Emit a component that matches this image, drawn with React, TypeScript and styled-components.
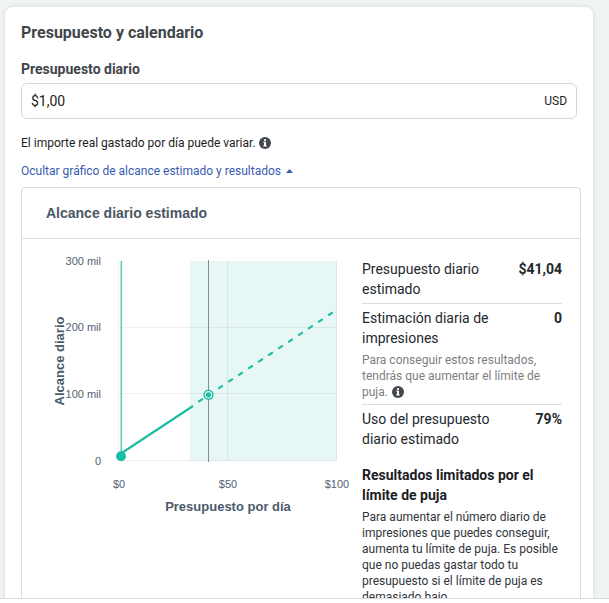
import React from "react";
import styled, { createGlobalStyle } from "styled-components";

const GlobalStyle = createGlobalStyle`
  * { box-sizing: border-box; }
  body { margin: 0; background: #fff; font-family: Roboto, sans-serif; }
`;

const Viewport = styled.div`
  height: 599px;
  overflow: hidden;
  background: #f1f4f4;
  border-bottom: 1px solid #d9dbdd;
  padding: 7px 0 0 5px;
`;

const Card = styled.section`
  width: 588px;
  height: 700px;
  padding: 16px;
  background: #fff;
  border-radius: 8px;
  box-shadow: 0 0 5px rgba(0, 0, 0, 0.12);
`;

const Title = styled.h2`
  margin: 0;
  font-size: 16px;
  line-height: 20px;
  font-weight: 700;
  color: #41464b;
`;

const Label = styled.label`
  display: block;
  margin-top: 16px;
  font-size: 14px;
  line-height: 20px;
  font-weight: 700;
  color: #41464b;
`;

const Field = styled.div`
  display: flex;
  align-items: center;
  justify-content: space-between;
  width: 556px;
  height: 36px;
  margin-top: 4px;
  padding: 0 9px;
  border: 1px solid #d5d7d9;
  border-radius: 6px;
  font-size: 14px;
  color: #1c1e21;
`;

const Currency = styled.span`
  font-size: 12px;
`;

const Note = styled.p`
  display: flex;
  align-items: center;
  gap: 3px;
  margin: 16px 0 0;
  font-size: 12px;
  line-height: 16px;
  color: #1c1e21;
`;

const Toggle = styled.button`
  display: flex;
  align-items: center;
  gap: 5px;
  margin: 12px 0 0;
  padding: 0;
  border: 0;
  background: none;
  font: 12px/16px Roboto, sans-serif;
  color: #385bae;
`;

const Panel = styled.section`
  width: 560px;
  height: 520px;
  margin-top: 8px;
  border: 1px solid #dadcde;
  border-radius: 4px;
`;

const PanelHeader = styled.h3`
  margin: 0;
  height: 51px;
  padding: 0 24px;
  border-bottom: 1px solid #dadcde;
  font: 700 14px/50px "Liberation Sans", Arial, sans-serif;
  color: #4b5665;
`;

const PanelBody = styled.div`
  display: flex;
`;

const Chart = styled.svg`
  display: block;
  flex: none;
  width: 340px;
  height: 290px;
  font-family: "Liberation Sans", Arial, sans-serif;
`;

const Tick = styled.text`
  font-size: 11px;
  fill: #536174;
`;

const AxisTitle = styled.text`
  font-size: 13px;
  font-weight: 700;
  fill: #4b5a6b;
  text-anchor: middle;
`;

const Details = styled.div`
  width: 200px;
  padding-top: 20px;
`;

const Metric = styled.div<{ $last?: boolean }>`
  padding-bottom: 4px;
  margin-bottom: 4px;
  border-bottom: ${(p) => (p.$last ? "0" : "1px solid #dadcde")};
`;

const MetricRow = styled.div`
  display: flex;
  justify-content: space-between;
  font-size: 14px;
  line-height: 20px;
  color: #23282e;
`;

const MetricName = styled.span`
  width: 140px;
`;

const MetricValue = styled.strong`
  font-weight: 700;
`;

const Hint = styled.p`
  margin: 4px 0 0;
  font-size: 12px;
  line-height: 16px;
  color: #7c8083;

  svg {
    vertical-align: -1.5px;
    margin-left: 1px;
  }
`;

const ResultTitle = styled.h4`
  margin: 12px 0 0;
  font-size: 14px;
  line-height: 20px;
  font-weight: 700;
  color: #1c2025;
`;

const ResultText = styled.p`
  margin: 4px 0 0;
  font-size: 12px;
  line-height: 16px;
  color: #30353b;
`;

const InfoIcon = () => (
  <svg width="12" height="12" viewBox="0 0 12 12">
    <circle cx="6" cy="6" r="6" fill="#444950" />
    <path d="M5 2.2h2v1.7H5zM4.3 4.8H7v3.6h.8v1H4.2v-1H5V5.8h-.7z" fill="#fff" />
  </svg>
);

const ReachChart = () => (
  <Chart viewBox="22 239 340 290">
    <rect x="190" y="261" width="147" height="200" fill="#e7f7f5" />
    <g shapeRendering="crispEdges" stroke="#000" strokeOpacity="0.06">
      <path d="M118.5 261V461M227.5 261V461M336.5 261V461" />
      <path d="M119 327.5H336M119 393.5H336M119 460.5H336" />
    </g>
    <path d="M121.3 261V456" stroke="#60cdbb" strokeWidth="1.6" />
    <path d="M121 453.5L193 406" stroke="#1abca3" strokeWidth="2.1" />
    <path
      d="M198.3 401.9L335 310.9"
      stroke="#1abca3"
      strokeWidth="2.1"
      strokeDasharray="5.5 6.5"
    />
    <path d="M208.5 260V462" stroke="#858b91" />
    <circle cx="121" cy="456.2" r="5" fill="#1abca3" />
    <circle cx="208.5" cy="394.8" r="4.4" fill="#e7f7f5" stroke="#1abca3" strokeWidth="1.4" />
    <circle cx="208.5" cy="394.8" r="2.6" fill="#1abca3" />
    <Tick x="101" y="265" textAnchor="end">300 mil</Tick>
    <Tick x="101" y="331" textAnchor="end">200 mil</Tick>
    <Tick x="101" y="398" textAnchor="end">100 mil</Tick>
    <Tick x="101" y="465" textAnchor="end">0</Tick>
    <Tick x="119" y="488" textAnchor="middle">$0</Tick>
    <Tick x="228" y="488" textAnchor="middle">$50</Tick>
    <Tick x="337" y="488" textAnchor="middle">$100</Tick>
    <AxisTitle x="228" y="511">Presupuesto por día</AxisTitle>
    <AxisTitle transform="translate(64 361) rotate(-90)">Alcance diario</AxisTitle>
  </Chart>
);

export default function App() {
  return (
    <>
      <GlobalStyle />
      <Viewport>
        <Card>
          <Title>Presupuesto y calendario</Title>
          <Label>Presupuesto diario</Label>
          <Field>
            <span>$1,00</span>
            <Currency>USD</Currency>
          </Field>
          <Note>
            El importe real gastado por día puede variar.
            <InfoIcon />
          </Note>
          <Toggle>
            Ocultar gráfico de alcance estimado y resultados
            <svg width="7" height="4" viewBox="0 0 7 4">
              <path d="M0 4L3.5 0L7 4z" fill="#385bae" />
            </svg>
          </Toggle>
          <Panel>
            <PanelHeader>Alcance diario estimado</PanelHeader>
            <PanelBody>
              <ReachChart />
              <Details>
                <Metric>
                  <MetricRow>
                    <MetricName>Presupuesto diario estimado</MetricName>
                    <MetricValue>$41,04</MetricValue>
                  </MetricRow>
                </Metric>
                <Metric>
                  <MetricRow>
                    <MetricName>Estimación diaria de impresiones</MetricName>
                    <MetricValue>0</MetricValue>
                  </MetricRow>
                  <Hint>
                    Para conseguir estos resultados, tendrás que aumentar el
                    límite de puja. <InfoIcon />
                  </Hint>
                </Metric>
                <Metric $last>
                  <MetricRow>
                    <MetricName>Uso del presupuesto diario estimado</MetricName>
                    <MetricValue>79%</MetricValue>
                  </MetricRow>
                </Metric>
                <ResultTitle>Resultados limitados por el límite de puja</ResultTitle>
                <ResultText>
                  Para aumentar el número diario de impresiones que puedes
                  conseguir, aumenta tu límite de puja. Es posible que no puedas
                  gastar todo tu presupuesto si el límite de puja es demasiado
                  bajo.
                </ResultText>
              </Details>
            </PanelBody>
          </Panel>
        </Card>
      </Viewport>
    </>
  );
}
